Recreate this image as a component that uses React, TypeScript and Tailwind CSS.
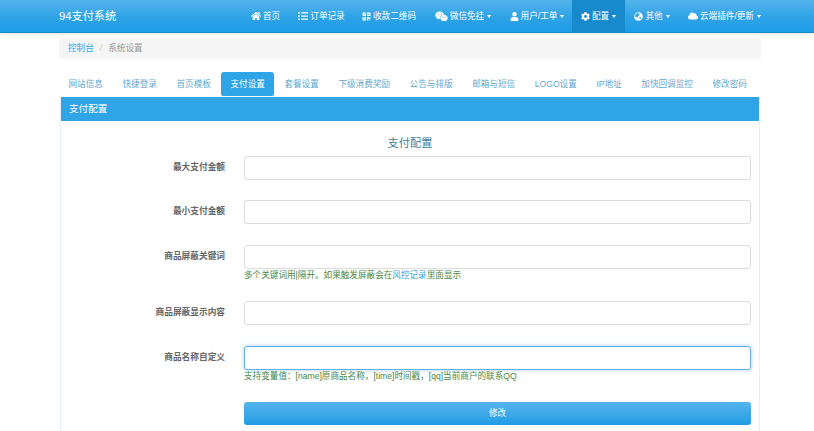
import { FaHome, FaListUl, FaQrcode, FaUser, FaCog, FaCloud, FaWeixin, FaGlobeAsia } from 'react-icons/fa';
import type { ReactNode } from 'react';

const navItems: { label: string; icon: ReactNode; caret?: boolean; active?: boolean; cls: string }[] = [
  { label: '首页', icon: <FaHome className="w-[10px] h-[10px]" />, cls: 'w-[47px]' },
  { label: '订单记录', icon: <FaListUl className="w-[10px] h-[10px]" />, cls: 'w-[65px]' },
  { label: '收款二维码', icon: <FaQrcode className="w-[9px] h-[9px]" />, cls: 'w-[70px]' },
  { label: '微信免挂', icon: <FaWeixin className="w-[13px] h-[13px]" />, caret: true, cls: 'w-[78px]' },
  { label: '用户/工单', icon: <FaUser className="w-[9px] h-[9px]" />, caret: true, cls: 'w-[70px]' },
  { label: '配置', icon: <FaCog className="w-[9px] h-[9px]" />, caret: true, active: true, cls: 'w-[53px]' },
  { label: '其他', icon: <FaGlobeAsia className="w-[9px] h-[9px]" />, caret: true, cls: 'w-[54px]' },
  { label: '云端插件/更新', icon: <FaCloud className="w-[10px] h-[10px]" />, caret: true, cls: 'w-[91px]' },
];

const tabs = ['网站信息', '快捷登录', '首页模板', '支付设置', '套餐设置', '下级消费奖励', '公告与排版', '邮箱与短信', 'LOGO设置', 'IP地址', '加快回调监控', '修改密码'];

function Field({ label, focus, hint, className }: { label: string; focus?: boolean; hint?: ReactNode; className: string }) {
  return (
    <div className={`flex ${className}`}>
      <label className="w-[165px] pr-[19px] h-[24px] flex items-center justify-end text-[8.7px] font-bold text-[#666]">{label}</label>
      <div className="w-[507px]">
        <input
          type="text"
          className={`block w-full h-[24px] rounded-[3px] bg-white outline-none border ${focus ? 'border-[#66afe9] shadow-[0_0_4px_rgba(102,175,233,0.6)]' : 'border-[#dcdcdc]'}`}
        />
        {hint && <p className="mt-[1px] text-[8.6px] leading-[10px] text-[#468847]">{hint}</p>}
      </div>
    </div>
  );
}

export default function App() {
  return (
    <div className="h-[431px] overflow-hidden bg-white" style={{ fontFamily: '"Liberation Sans", "Noto Sans CJK SC", sans-serif' }}>
      <nav className="h-[33px] bg-gradient-to-b from-[#54b4eb] via-[#2fa4e7] to-[#1d9ce5] border-b border-[#178acc] shadow-[0_1px_3px_rgba(0,0,0,0.12)]">
        <div className="flex h-full items-center pl-[59px]">
          <span className="w-[183px] text-[11.2px] text-white">94支付系统</span>
          <div className="flex h-full">
            {navItems.map(item => (
              <a key={item.label} className={`flex items-center justify-center gap-[2px] h-full text-[8.6px] text-white whitespace-nowrap ${item.cls} ${item.active ? 'bg-[#178acc]' : ''}`}>
                {item.icon}
                <span>{item.label}</span>
                {item.caret && <span className="ml-[1px] w-0 h-0 border-x-[2.5px] border-x-transparent border-t-[3px] border-t-white" />}
              </a>
            ))}
          </div>
        </div>
      </nav>

      <div className="ml-[59px] w-[702px]">
        <div className="mt-[5px] h-[21px] flex items-center px-[9px] rounded-[3px] bg-[#f5f5f5] text-[8.6px]">
          <a className="text-[#2fa4e7]">控制台</a>
          <span className="mx-[6px] text-[#ccc]">/</span>
          <span className="text-[#999]">系统设置</span>
        </div>

        <ul className="mt-[13px] flex gap-[0.6px] h-[24px]">
          {tabs.map(tab => (
            <li
              key={tab}
              className={`flex items-center shrink-0 whitespace-nowrap px-[9.5px] rounded-t-[3px] rounded-b-[2px] text-[8.6px] ${tab === '支付设置' ? 'bg-[#2fa4e7] text-white' : 'text-[#5fa8cf]'}`}
            >
              {tab}
            </li>
          ))}
        </ul>

        <div className="mt-[1px] ml-[1px] w-[700px] h-[400px] border border-[#e4f1fa] border-t-0">
          <div className="h-[24px] flex items-center px-[8px] bg-[#2fa4e7] text-white text-[9.6px]">支付配置</div>
          <h4 className="mt-[15px] text-center text-[11.2px] leading-[14px] text-[#3f7f9f]">支付配置</h4>
          <div className="ml-[18px]">
            <Field label="最大支付金额" className="mt-[6px]" />
            <Field label="最小支付金额" className="mt-[20px]" />
            <Field
              label="商品屏蔽关键词"
              className="mt-[21px]"
              hint={<>多个关键词用|隔开。如果触发屏蔽会在<span className="text-[#2fa4e7]">风控记录</span>里面显示</>}
            />
            <Field label="商品屏蔽显示内容" className="mt-[21px]" />
            <Field
              label="商品名称自定义"
              focus
              className="mt-[21px]"
              hint="支持变量值：[name]原商品名称，[time]时间戳，[qq]当前商户的联系QQ"
            />
            <div className="mt-[21px] ml-[165px] w-[507px] h-[23px] flex items-center justify-center rounded-[3px] bg-gradient-to-b from-[#54b4eb] to-[#1d9ce5] text-white text-[8.6px]">
              修改
            </div>
          </div>
        </div>
      </div>
    </div>
  );
}
